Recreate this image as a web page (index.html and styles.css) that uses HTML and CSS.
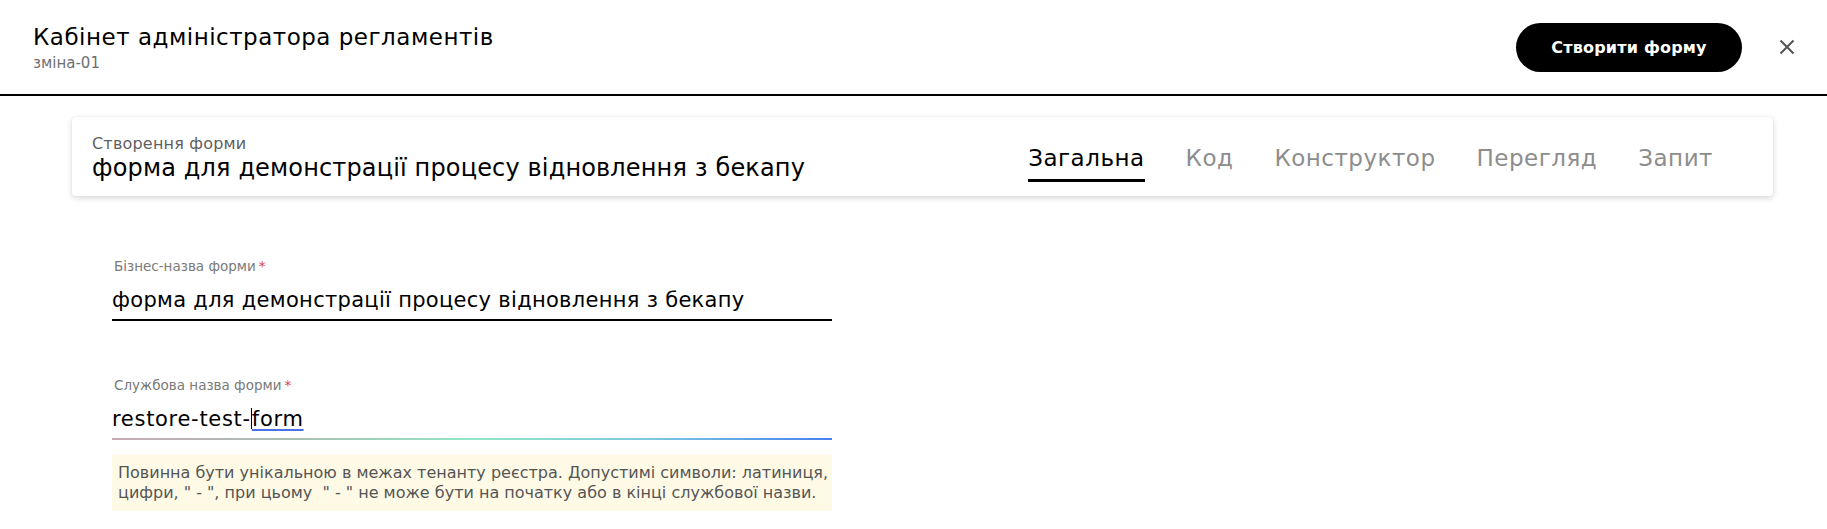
FILE: index.html
```html
<!DOCTYPE html>
<html lang="uk">
<head>
<meta charset="utf-8">
<title>Кабінет адміністратора регламентів</title>
<link rel="stylesheet" href="styles.css">
</head>
<body>
<header class="topbar">
  <div class="brand">
    <div class="brand-title">Кабінет адміністратора регламентів</div>
    <div class="brand-sub">зміна-01</div>
  </div>
  <div class="actions">
    <button class="btn-primary" type="button">Створити форму</button>
    <button class="btn-close" type="button" aria-label="Закрити">
      <svg width="16" height="16" viewBox="0 0 16 16"><path d="M1.5 1.5 L14.5 14.5 M14.5 1.5 L1.5 14.5" stroke="#555" stroke-width="2" fill="none"/></svg>
    </button>
  </div>
</header>

<section class="card">
  <div class="card-head">
    <div class="card-sub">Створення форми</div>
    <div class="card-title">форма для демонстрації процесу відновлення з бекапу</div>
  </div>
  <nav class="tabs">
    <span class="tab active">Загальна</span>
    <span class="tab">Код</span>
    <span class="tab">Конструктор</span>
    <span class="tab">Перегляд</span>
    <span class="tab">Запит</span>
  </nav>
</section>

<main class="form">
  <div class="field">
    <div class="label">Бізнес-назва форми<span class="req">*</span></div>
    <div class="value">форма для демонстрації процесу відновлення з бекапу</div>
  </div>
  <div class="field focused">
    <div class="label">Службова назва форми<span class="req">*</span></div>
    <div class="value">restore-test-<span class="caret"></span><span class="ime">form</span></div>
  </div>
  <div class="hint">Повинна бути унікальною в межах тенанту реєстра. Допустимі символи: латиниця,<br>цифри, " - ", при цьому &nbsp;" - " не може бути на початку або в кінці службової назви.</div>
</main>
</body>
</html>
```

FILE: styles.css
```css
* { box-sizing: border-box; }
body {
  margin: 0;
  background: #fff;
  color: #000;
  font-family: "DejaVu Sans", "Noto Sans", sans-serif;
}

.topbar {
  height: 96px;
  border-bottom: 2px solid #000;
  display: flex;
  align-items: center;
  justify-content: space-between;
  padding: 0 32px 0 33px;
}
.brand { display: flex; flex-direction: column; gap: 3px; }
.brand-title { font-size: 23px; line-height: 28px; letter-spacing: 0.5px; }
.brand-sub { font-size: 15px; line-height: 18px; color: #6f6f6f; }

.actions { display: flex; align-items: center; }
.btn-primary {
  height: 49px;
  width: 226px;
  border: 0;
  border-radius: 25px;
  background: #000;
  color: #fff;
  font-family: inherit;
  font-size: 16px;
  font-weight: bold;
  letter-spacing: 0.2px;
  cursor: pointer;
}
.btn-close {
  margin-left: 37px;
  padding: 0;
  border: 0;
  background: none;
  width: 16px;
  height: 16px;
  display: flex;
}

.card {
  margin: 21px 54px 0 72px;
  height: 79px;
  background: #fff;
  border-radius: 4px;
  box-shadow: 0 2px 6px rgba(0, 0, 0, 0.16), 0 0 2px rgba(0, 0, 0, 0.05);
  display: flex;
  justify-content: space-between;
  padding: 16px 60px 0 20px;
}
.card-sub { font-size: 16px; line-height: 21px; color: #5f5f5f; letter-spacing: 0.2px; }
.card-title { font-size: 24px; line-height: 28px; letter-spacing: 0.15px; }

.tabs {
  display: flex;
  gap: 41px;
  align-self: flex-end;
  margin-bottom: 14px;
}
.tab {
  font-size: 23px;
  line-height: 28px;
  letter-spacing: 0.5px;
  color: #8d8d8d;
  padding-bottom: 7px;
  border-bottom: 3px solid transparent;
}
.tab.active { color: #000; border-bottom-color: #000; }

.form {
  margin-left: 112px;
  width: 720px;
  padding-top: 62px;
}
.field { margin-bottom: 56px; }
.field.focused { margin-bottom: 15px; }
.label {
  font-size: 13.5px;
  line-height: 16px;
  color: #7a7a7a;
  margin-left: 2px;
  margin-bottom: 11px;
}
.req { color: #e0483e; margin-left: 3px; }
.value {
  font-size: 21px;
  line-height: 31px;
  letter-spacing: 0.3px;
  padding-bottom: 3px;
  border-bottom: 2px solid #000;
  white-space: nowrap;
}
.focused .value {
  letter-spacing: 0.7px;
  border-bottom: 0;
  padding-bottom: 5px;
  background: linear-gradient(90deg, #c6a9b6 0%, #a9c0b4 25%, #92e6c6 50%, #7fc7df 75%, #4a7ff0 100%) no-repeat left bottom / 100% 2px;
}
.caret {
  display: inline-block;
  width: 1px;
  height: 21px;
  background: #000;
  vertical-align: -3px;
}
.ime {
  text-decoration: underline;
  text-decoration-color: #4a72e8;
  text-decoration-thickness: 2px;
  text-underline-offset: 3px;
}
.hint {
  background: #fffae6;
  color: #555;
  font-size: 16px;
  line-height: 20px;
  padding: 8px 0 8px 6px;
  white-space: nowrap;
}
```
